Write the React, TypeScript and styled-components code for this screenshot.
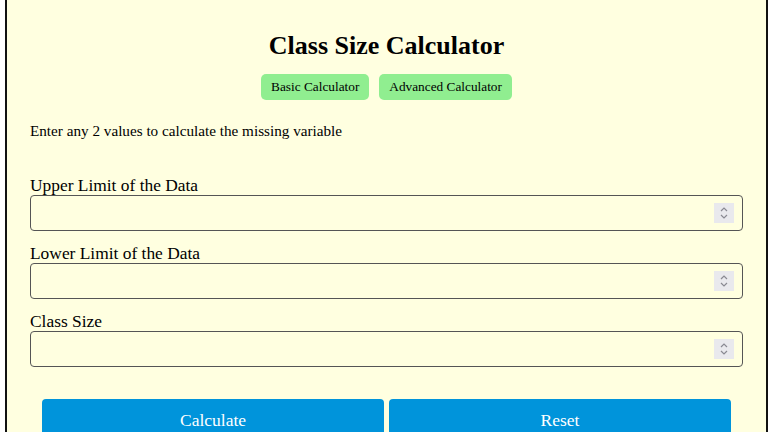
import React from 'react';
import styled, { createGlobalStyle } from 'styled-components';

const GlobalStyle = createGlobalStyle`
  html, body {
    margin: 0;
    padding: 0;
    background: #ffffff;
    font-family: "Liberation Serif", "Times New Roman", serif;
  }
`;

const Page = styled.div`
  width: 768px;
  height: 432px;
  overflow: hidden;
  padding-left: 5px;
  box-sizing: border-box;
`;

const Card = styled.div`
  width: 763px;
  min-height: 500px;
  box-sizing: border-box;
  background: #ffffe0;
  border-left: 2px solid #111;
  border-right: 2px solid #111;
  padding: 29px 23px 0 23px;
  color: #000;
`;

const Title = styled.h1`
  margin: 0;
  text-align: center;
  font-size: 26px;
  line-height: 34px;
  font-weight: bold;
`;

const ModeRow = styled.div`
  display: flex;
  justify-content: center;
  gap: 10px;
  margin-top: 11px;
`;

const ModeButton = styled.button`
  height: 26px;
  padding: 0 10px;
  border: none;
  border-radius: 5px;
  background: #90ee90;
  font-family: inherit;
  font-size: 13.3px;
  color: #000;
`;

const Hint = styled.p`
  margin: 22px 0 0;
  font-size: 15.2px;
  line-height: 18px;
`;

const Fields = styled.div`
  display: flex;
  flex-direction: column;
  gap: 12px;
  margin-top: 35px;
`;

const Field = styled.label`
  display: flex;
  flex-direction: column;
`;

const LabelText = styled.span`
  font-size: 17.4px;
  line-height: 20px;
`;

const InputBox = styled.div`
  display: flex;
  align-items: center;
  height: 36px;
  box-sizing: border-box;
  border: 1px solid #555;
  border-radius: 4px;
  padding-right: 8px;
`;

const NumberInput = styled.input`
  flex: 1;
  min-width: 0;
  height: 100%;
  border: none;
  background: transparent;
  outline: none;
  padding: 0 8px;
  font-family: inherit;
  font-size: 16px;
  appearance: textfield;
  &::-webkit-inner-spin-button,
  &::-webkit-outer-spin-button {
    -webkit-appearance: none;
    margin: 0;
  }
`;

const Spinner = styled.span`
  display: flex;
  align-items: center;
  justify-content: center;
  width: 20px;
  height: 20px;
  background: #e9e9ed;
`;

const Actions = styled.div`
  display: grid;
  grid-template-columns: 1fr 1fr;
  gap: 5px;
  margin: 32px 12px 0;
`;

const ActionButton = styled.button`
  height: 42px;
  border: none;
  border-radius: 4px;
  background: #0094db;
  color: #fff;
  font-family: inherit;
  font-size: 17.5px;
  padding: 0;
`;

const SpinIcon = () => (
  <svg width="10" height="16" viewBox="0 0 10 16" fill="none" stroke="#8a8a92" strokeWidth="1.2">
    <path d="M2 6 L5 3 L8 6" />
    <path d="M2 10 L5 13 L8 10" />
  </svg>
);

const fields = ['Upper Limit of the Data', 'Lower Limit of the Data', 'Class Size'];

export default function App() {
  return (
    <Page>
      <GlobalStyle />
      <Card>
        <Title>Class Size Calculator</Title>
        <ModeRow>
          <ModeButton>Basic Calculator</ModeButton>
          <ModeButton>Advanced Calculator</ModeButton>
        </ModeRow>
        <Hint>Enter any 2 values to calculate the missing variable</Hint>
        <Fields>
          {fields.map((f) => (
            <Field key={f}>
              <LabelText>{f}</LabelText>
              <InputBox>
                <NumberInput type="number" />
                <Spinner>
                  <SpinIcon />
                </Spinner>
              </InputBox>
            </Field>
          ))}
        </Fields>
        <Actions>
          <ActionButton>Calculate</ActionButton>
          <ActionButton>Reset</ActionButton>
        </Actions>
      </Card>
    </Page>
  );
}
